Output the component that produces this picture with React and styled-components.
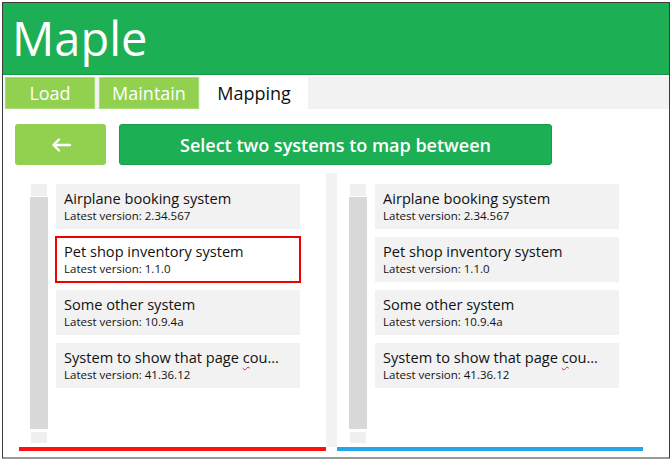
import React from 'react';
import styled, { createGlobalStyle } from 'styled-components';

const GlobalStyle = createGlobalStyle`
  html, body {
    margin: 0;
    padding: 0;
    background: #ffffff;
  }
  body {
    font-family: 'Open Sans', 'Liberation Sans', sans-serif;
  }
  * {
    box-sizing: border-box;
  }
`;

const Frame = styled.div`
  margin: 2px 0 0 2px;
  width: 668px;
  height: 457px;
  border: 1px solid #3a3a3a;
  border-bottom: 2px solid #9a9a9a;
  display: flex;
  flex-direction: column;
  background: #ffffff;
`;

const Header = styled.header`
  height: 72px;
  background: #1caf54;
  border-bottom: 1px solid #169846;
  color: #ffffff;
  font-size: 47px;
  line-height: 70px;
  padding-left: 9px;
`;

const TabBar = styled.nav`
  display: flex;
  margin-top: 2px;
  height: 32px;
  background: #f2f2f2;
  padding-left: 2px;
`;

const Tab = styled.div`
  width: ${props => props.width}px;
  margin-right: ${props => props.gap || 0}px;
  background: ${props => (props.active ? '#ffffff' : '#92d050')};
  color: ${props => (props.active ? '#111111' : '#ffffff')};
  border: ${props => (props.active ? 'none' : '1px solid #a9dc78')};
  font-size: 18px;
  display: flex;
  align-items: center;
  justify-content: center;
`;

const Toolbar = styled.div`
  display: flex;
  gap: 13px;
  padding: 15px 0 0 12px;
`;

const BackButton = styled.button`
  width: 91px;
  height: 41px;
  border: none;
  border-radius: 3px;
  background: #92d050;
  display: flex;
  align-items: center;
  justify-content: center;
  padding: 0;
`;

const TitleButton = styled.div`
  width: 433px;
  height: 41px;
  border-radius: 3px;
  background: #1caf54;
  border: 1px solid #179b49;
  color: #ffffff;
  font-size: 18px;
  font-weight: 600;
  display: flex;
  align-items: center;
  justify-content: center;
`;

const Columns = styled.div`
  display: flex;
  margin: 8px 0 0 16px;
  height: 278px;
`;

const Panel = styled.section`
  width: ${props => props.width}px;
  display: flex;
  flex-direction: column;
`;

const ListArea = styled.div`
  flex: 1;
  display: flex;
  padding: 11px 0 4px ${props => props.inset}px;
`;

const Bar = styled.div`
  height: 4px;
  background: ${props => props.color};
`;

const Divider = styled.div`
  width: 11px;
  background: #f2f2f2;
  margin-bottom: 4px;
`;

const Scrollbar = styled.div`
  width: 18px;
  margin-right: 8px;
  display: flex;
  flex-direction: column;
  align-items: center;
`;

const ScrollArrow = styled.div`
  width: 16px;
  height: ${props => props.h}px;
  background: #efefef;
`;

const Thumb = styled.div`
  flex: 1;
  width: 18px;
  margin: 1px 0 3px;
  background: #d8d8d8;
`;

const CardList = styled.div`
  width: 244px;
  display: flex;
  flex-direction: column;
  gap: 8px;
`;

const Card = styled.div`
  height: 45px;
  padding: 4px 8px 0;
  outline: ${props => (props.selected ? '2px solid #f00000' : 'none')};
  outline-offset: -1px;
  background: ${props => (props.selected ? '#ffffff' : '#f2f2f2')};
`;

const CardTitle = styled.div`
  font-size: 14.6px;
  line-height: 20px;
  color: #111111;
  white-space: nowrap;
`;

const Squiggle = styled.span`
  text-decoration: underline wavy #e02020;
  text-decoration-thickness: 1px;
  text-underline-offset: 3px;
`;

const CardVersion = styled.div`
  font-size: 11.5px;
  line-height: 16px;
  color: #111111;
`;

const systems = [
  { name: 'Airplane booking system', version: '2.34.567' },
  { name: 'Pet shop inventory system', version: '1.1.0' },
  { name: 'Some other system', version: '10.9.4a' },
  { name: 'System to show that page cou…', version: '41.36.12', spell: true },
];

const ArrowLeft = () => (
  <svg width="20" height="14" viewBox="0 0 20 14">
    <path
      d="M19 7H2.5M8 1.5L2.5 7L8 12.5"
      fill="none"
      stroke="#ffffff"
      strokeWidth="2.4"
      strokeLinecap="round"
      strokeLinejoin="round"
    />
  </svg>
);

const SystemName = ({ name, spell }) => {
  if (!spell) return name;
  const head = name.slice(0, name.length - 4);
  return (
    <>
      {head}
      <Squiggle>c</Squiggle>
      {'ou…'}
    </>
  );
};

const SystemList = ({ selected }) => (
  <CardList>
    {systems.map((s, i) => (
      <Card key={s.name} selected={selected === i}>
        <CardTitle>
          <SystemName name={s.name} spell={s.spell} />
        </CardTitle>
        <CardVersion>Latest version: {s.version}</CardVersion>
      </Card>
    ))}
  </CardList>
);

const ScrollColumn = () => (
  <Scrollbar>
    <ScrollArrow h={12} />
    <Thumb />
    <ScrollArrow h={11} />
  </Scrollbar>
);

export default function App() {
  return (
    <>
      <GlobalStyle />
      <Frame>
        <Header>Maple</Header>
        <TabBar>
          <Tab width={90} gap={4}>Load</Tab>
          <Tab width={100} gap={1}>Maintain</Tab>
          <Tab width={108} active>Mapping</Tab>
        </TabBar>
        <Toolbar>
          <BackButton aria-label="Back">
            <ArrowLeft />
          </BackButton>
          <TitleButton>Select two systems to map between</TitleButton>
        </Toolbar>
        <Columns>
          <Panel width={307}>
            <ListArea inset={11}>
              <ScrollColumn />
              <SystemList selected={1} />
            </ListArea>
            <Bar color="#ff1010" />
          </Panel>
          <Divider />
          <Panel width={306}>
            <ListArea inset={12}>
              <ScrollColumn />
              <SystemList />
            </ListArea>
            <Bar color="#22a8ea" />
          </Panel>
        </Columns>
      </Frame>
    </>
  );
}
